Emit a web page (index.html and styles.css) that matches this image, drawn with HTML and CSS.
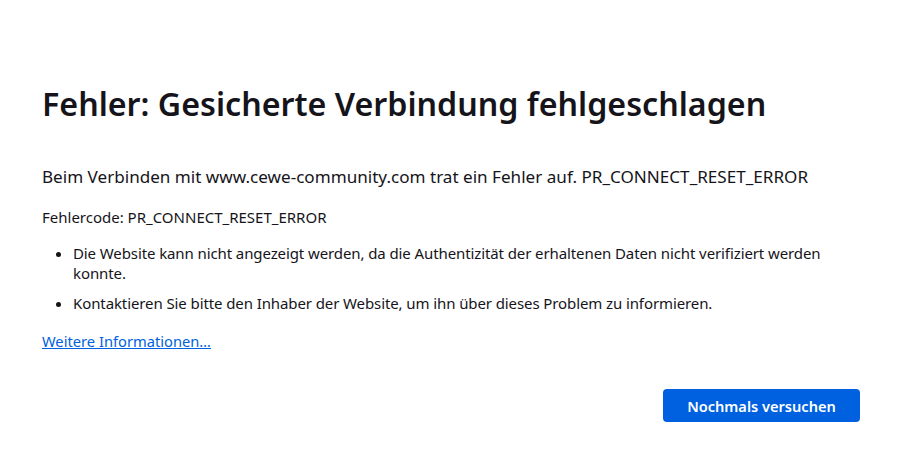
FILE: index.html
```html
<!DOCTYPE html>
<html lang="de">
<head>
    <meta charset="UTF-8">
    <title>Fehler: Gesicherte Verbindung fehlgeschlagen</title>
    <link rel="stylesheet" href="styles.css">
</head>
<body>
    <div class="container">
        <h1 class="title">Fehler: Gesicherte Verbindung fehlgeschlagen</h1>
        <p class="intro">Beim Verbinden mit www.cewe-community.com trat ein Fehler auf. PR_CONNECT_RESET_ERROR</p>
        <p class="code">Fehlercode: PR_CONNECT_RESET_ERROR</p>
        <ul class="reasons">
            <li>Die Website kann nicht angezeigt werden, da die Authentizität der erhaltenen Daten nicht verifiziert werden konnte.</li>
            <li>Kontaktieren Sie bitte den Inhaber der Website, um ihn über dieses Problem zu informieren.</li>
        </ul>
        <a class="more" href="#">Weitere Informationen…</a>
        <div class="actions">
            <button class="retry">Nochmals versuchen</button>
        </div>
    </div>
</body>
</html>
```

FILE: styles.css
```css
body {
    margin: 0;
    padding: 0;
    background: #fff;
    color: #15141a;
    font-family: 'Noto Sans', sans-serif;
    font-size: 15px;
}
.container {
    padding: 80px 40px 0 42px;
}
.title {
    margin: 0;
    font-size: 32.2px;
    font-weight: 600;
    line-height: 48px;
}
.intro {
    margin: 37px 0 0;
    font-size: 17.1px;
    line-height: 24px;
}
.code {
    margin: 18px 0 0;
    font-size: 15px;
    line-height: 20px;
}
.reasons {
    margin: 16px 0 0;
    padding-left: 31px;
}
.reasons li {
    line-height: 20px;
    margin-bottom: 10px;
    letter-spacing: -0.1px;
}
.more {
    display: inline-block;
    margin-top: 8px;
    color: #0061e0;
    font-size: 14.7px;
}
.actions {
    display: flex;
    justify-content: flex-end;
    margin-top: 38px;
}
.retry {
    background: #0061e0;
    color: #fff;
    border: none;
    border-radius: 4px;
    height: 33px;
    width: 197px;
    font-family: inherit;
    font-size: 14.6px;
    font-weight: 600;
    cursor: pointer;
}
```
